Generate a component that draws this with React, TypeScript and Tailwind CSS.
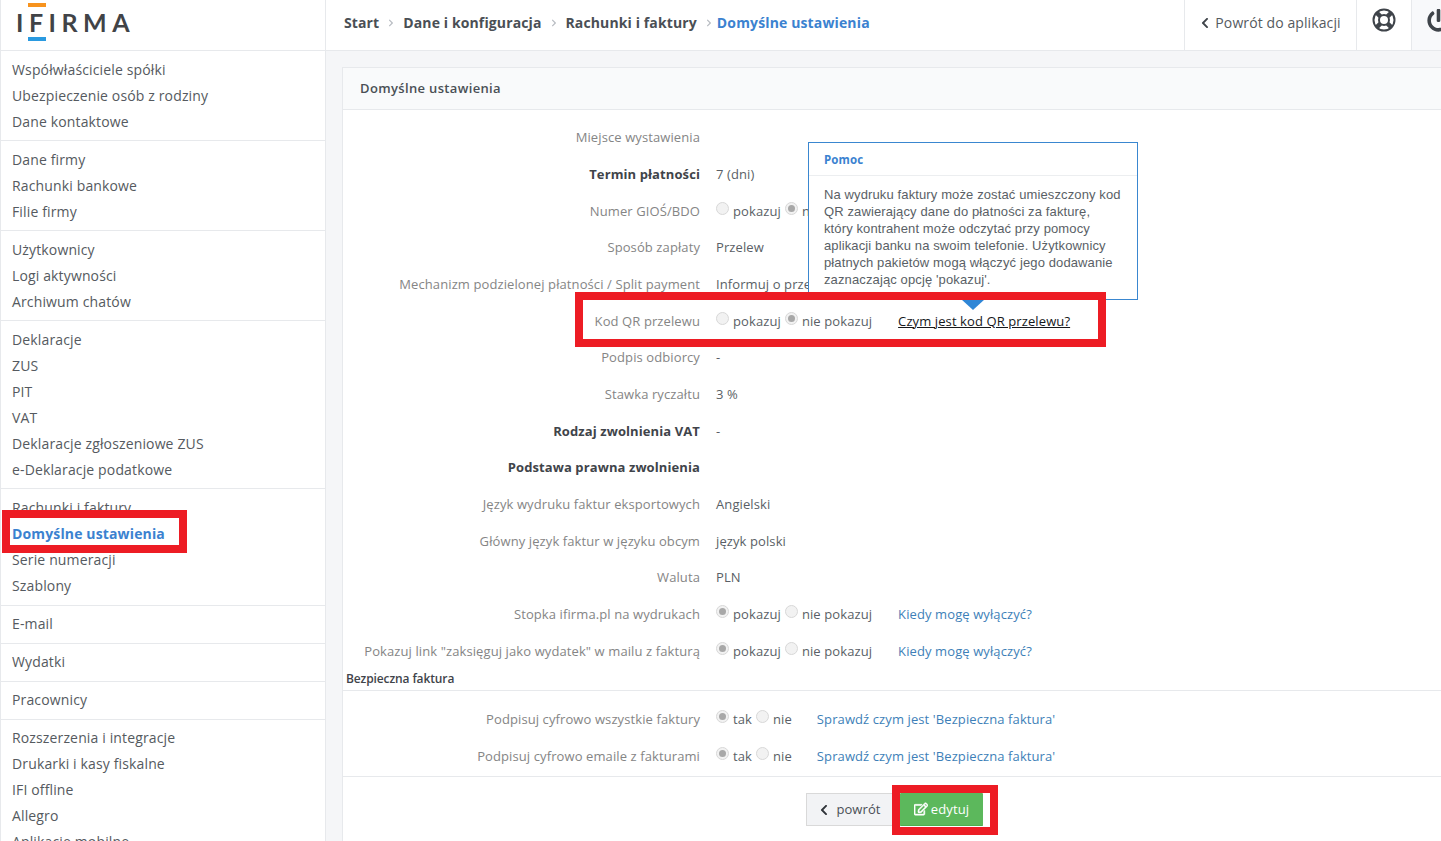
import React from "react";
import { FaChevronLeft, FaChevronRight, FaPowerOff, FaRegEdit } from "react-icons/fa";

const groups: string[][] = [
  ["Współwłaściciele spółki", "Ubezpieczenie osób z rodziny", "Dane kontaktowe"],
  ["Dane firmy", "Rachunki bankowe", "Filie firmy"],
  ["Użytkownicy", "Logi aktywności", "Archiwum chatów"],
  ["Deklaracje", "ZUS", "PIT", "VAT", "Deklaracje zgłoszeniowe ZUS", "e-Deklaracje podatkowe"],
  ["Rachunki i faktury", "Domyślne ustawienia", "Serie numeracji", "Szablony"],
  ["E-mail"],
  ["Wydatki"],
  ["Pracownicy"],
  ["Rozszerzenia i integracje", "Drukarki i kasy fiskalne", "IFI offline", "Allegro", "Aplikacje mobilne"],
];

function Radio({ on }: { on?: boolean }) {
  return (
    <span className="relative -top-[3px] flex h-[13px] w-[13px] shrink-0 items-center justify-center rounded-full border border-[#d8d8d8] bg-[#f2f2f2]">
      {on && <span className="h-[7px] w-[7px] rounded-full bg-[#a8a8a8]" />}
    </span>
  );
}

function Choice({ a, b, on }: { a: string; b: string; on: 0 | 1 }) {
  return (
    <span className="flex items-center">
      <Radio on={on === 0} />
      <span className="mr-[4px] ml-[4px]">{a}</span>
      <Radio on={on === 1} />
      <span className="ml-[4px]">{b}</span>
    </span>
  );
}

function Row({ label, bold, children }: { label: string; bold?: boolean; children?: React.ReactNode }) {
  return (
    <div className="flex h-[36.7px] items-center whitespace-nowrap">
      <div className={`w-[357px] shrink-0 text-right ${bold ? "font-bold text-[#3f444a]" : "text-[#858585]"}`}>{label}</div>
      <div className="ml-[16px] flex items-center text-[#5a5f66]">{children}</div>
    </div>
  );
}

const Crumb = ({ t }: { t: string }) => (
  <>
    <span className="font-bold tracking-[0.12px] text-[#4a4f55]">{t}</span>
    <FaChevronRight className="mx-[8px] text-[8px] text-[#b8bcc2]" />
  </>
);

function LifeRing() {
  return (
    <svg width="24" height="24" viewBox="0 0 24 24" fill="none" stroke="#3f444a">
      <circle cx="12" cy="12" r="10.5" strokeWidth="2" />
      <circle cx="12" cy="12" r="5" strokeWidth="2" />
      <path d="M4.6 4.6 8.4 8.4M19.4 4.6 15.6 8.4M4.6 19.4 8.4 15.6M19.4 19.4 15.6 15.6" strokeWidth="4.4" />
    </svg>
  );
}

export default function App() {
  return (
    <div className="relative flex h-[841px] w-[1441px] overflow-hidden bg-[#f5f6f8] text-[13px] tracking-[0.1px] text-[#555a60] [font-family:'Open_Sans',sans-serif]">
      {/* sidebar */}
      <aside className="w-[326px] shrink-0 border-r border-l border-[#e7e9ec] bg-white">
        <div className="relative h-[51px] border-b border-[#e7e9ec]">
          <span className="absolute left-[27px] top-[3px] h-[4px] w-[18px] bg-[#f7931e]" />
          <span className="absolute left-[27px] top-[37px] h-[4px] w-[18px] bg-[#2a9ae0]" />
          <span className="absolute left-[15px] top-[3px] text-[25px] leading-[38px] font-bold tracking-[5.5px] text-[#414347] [font-family:'Lato',sans-serif]">IFIRMA</span>
        </div>
        {groups.map((g, i) => (
          <div key={i} className={`border-b border-[#e7e9ec] pl-[11px] ${i >= 4 ? "pb-[6px]" : "pb-[5px]"} ${i >= 5 ? "pt-[5px]" : "pt-[6px]"}`}>
            {g.map((t) => (
              <div key={t} className={`h-[26px] text-[14px] leading-[26px] tracking-[0.14px] ${t === "Domyślne ustawienia" ? "font-bold text-[#3b82d0]" : ""}`}>
                {t}
              </div>
            ))}
          </div>
        ))}
      </aside>

      {/* main */}
      <main className="min-w-0 flex-1">
        <header className="flex h-[51px] items-center border-b border-[#e7e9ec] bg-white text-[14px]">
          <div className="flex flex-1 items-center pb-[5px] pl-[18px] whitespace-nowrap">
            <Crumb t="Start" />
            <Crumb t="Dane i konfiguracja" />
            <Crumb t="Rachunki i faktury" />
            <span className="-ml-[4px] font-bold tracking-[0.14px] text-[#3b82d0]">Domyślne ustawienia</span>
          </div>
          <div className="flex h-full w-[172px] items-center justify-center border-l border-[#e7e9ec] pr-[1px] pb-[5px] whitespace-nowrap">
            <FaChevronLeft className="mr-[4px] text-[12px] text-[#3f444a]" />
            Powrót do aplikacji
          </div>
          <div className="flex h-full w-[55px] items-center justify-center border-l border-[#e7e9ec] pb-[10px]">
            <LifeRing />
          </div>
          <div className="flex h-full w-[30px] items-center overflow-hidden border-l border-[#e7e9ec] bg-[#f8f9fb] pb-[10px] pl-[15px]">
            <FaPowerOff className="shrink-0 text-[23px] text-[#3f444a]" />
          </div>
        </header>

        <section className="mt-[16px] ml-[16px] w-[1200px] border border-[#e7e9ec] bg-white">
          <div className="flex h-[42px] items-center border-b border-[#e7e9ec] bg-[#f9fafb] pt-[1px] pl-[17px] text-[13px] font-semibold tracking-[0.35px] text-[#4a4f55]">
            Domyślne ustawienia
          </div>
          <div className="pt-[9.6px]">
            <Row label="Miejsce wystawienia" />
            <Row label="Termin płatności" bold>7 (dni)</Row>
            <Row label="Numer GIOŚ/BDO"><Choice a="pokazuj" b="nie pokazuj" on={1} /></Row>
            <Row label="Sposób zapłaty">Przelew</Row>
            <Row label="Mechanizm podzielonej płatności / Split payment">Informuj o przelewie</Row>
            <Row label="Kod QR przelewu">
              <Choice a="pokazuj" b="nie pokazuj" on={1} />
              <span className="ml-[26px] text-[#16181b] underline">Czym jest kod QR przelewu?</span>
            </Row>
            <Row label="Podpis odbiorcy">-</Row>
            <Row label="Stawka ryczałtu">3 %</Row>
            <Row label="Rodzaj zwolnienia VAT" bold>-</Row>
            <Row label="Podstawa prawna zwolnienia" bold />
            <Row label="Język wydruku faktur eksportowych">Angielski</Row>
            <Row label="Główny język faktur w języku obcym">język polski</Row>
            <Row label="Waluta">PLN</Row>
            <Row label="Stopka ifirma.pl na wydrukach">
              <Choice a="pokazuj" b="nie pokazuj" on={0} />
              <span className="ml-[26px] text-[#3e7fb8]">Kiedy mogę wyłączyć?</span>
            </Row>
            <Row label="Pokazuj link &quot;zaksięguj jako wydatek&quot; w mailu z fakturą">
              <Choice a="pokazuj" b="nie pokazuj" on={0} />
              <span className="ml-[26px] text-[#3e7fb8]">Kiedy mogę wyłączyć?</span>
            </Row>
          </div>
          <div className="flex h-[21px] items-center border-b border-[#e7e9ec] pb-[2px] pl-[3px] text-[12px] font-semibold tracking-[-0.12px] text-[#3f444a]">
            Bezpieczna faktura
          </div>
          <div className="pt-[10.4px] pb-[1.6px]">
            <Row label="Podpisuj cyfrowo wszystkie faktury">
              <Choice a="tak" b="nie" on={0} />
              <span className="ml-[25px] text-[#3e7fb8]">Sprawdź czym jest 'Bezpieczna faktura'</span>
            </Row>
            <Row label="Podpisuj cyfrowo emaile z fakturami">
              <Choice a="tak" b="nie" on={0} />
              <span className="ml-[25px] text-[#3e7fb8]">Sprawdź czym jest 'Bezpieczna faktura'</span>
            </Row>
          </div>
          <div className="flex h-[70px] gap-[7px] border-t border-[#e7e9ec] pt-[16px] pl-[463px]">
            <div className="flex h-[33px] w-[87px] items-center justify-center border border-[#d9d9d9] bg-[#f2f3f5] text-[#4a4f55]">
              <FaChevronLeft className="mr-[6px] text-[12px] text-[#2f3338]" />
              powrót
            </div>
            <div className="flex h-[33px] w-[83px] items-center justify-center rounded-[1px] border-b border-[#4cae4c] bg-[#5cb85c] text-white">
              <FaRegEdit strokeWidth={20} className="mr-[3px] text-[14px]" />
              edytuj
            </div>
          </div>
        </section>
      </main>

      {/* popover */}
      <div className="absolute top-[142px] left-[808px] h-[158px] w-[330px] border border-[#3a87d0] bg-white">
        <div className="flex h-[33px] items-center border-b border-[#eceef0] pt-[1px] pl-[15px] text-[11.5px] font-bold text-[#3b82d0]">Pomoc</div>
        <p className="m-0 pt-[10px] pl-[15px] text-[13px] leading-[17px] tracking-[0.12px] text-[#5a5f66] [font-family:'Liberation_Sans',sans-serif]">
          Na wydruku faktury może zostać umieszczony kod<br />
          QR zawierający dane do płatności za fakturę,<br />
          który kontrahent może odczytać przy pomocy<br />
          aplikacji banku na swoim telefonie. Użytkownicy<br />
          płatnych pakietów mogą włączyć jego dodawanie<br />
          zaznaczając opcję 'pokazuj'.
        </p>
        <span className="absolute top-full left-[152px] h-0 w-0 border-x-[12px] border-t-[11px] border-x-transparent border-t-[#2f86d6]" />
      </div>

      {/* red annotation frames */}
      <div className="absolute top-[292px] left-[575px] h-[55px] w-[531px] border-[8px] border-[#ed1c24]" />
      <div className="absolute top-[510px] left-[2px] h-[43px] w-[185px] border-[8px] border-[#ed1c24]" />
      <div className="absolute top-[785px] left-[892px] h-[50px] w-[106px] border-[8px] border-[#ed1c24]" />
    </div>
  );
}
